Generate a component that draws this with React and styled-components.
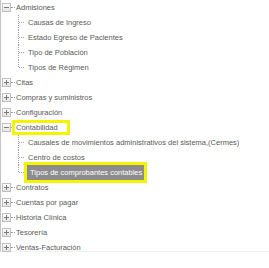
import React from "react";
import styled, { createGlobalStyle, css } from "styled-components";

const Global = createGlobalStyle`
  html, body { margin: 0; padding: 0; background: #fff; }
  body { font-family: "Liberation Sans", Arial, sans-serif; }
`;

const Panel = styled.div`
  width: 269px;
  height: 252px;
  box-sizing: border-box;
  border-left: 1px solid #c4c4c4;
  border-bottom: 1px solid #f0f0f0;
  padding-left: 1px;
`;

const List = styled.ul`
  list-style: none;
  margin: 0;
  padding: 0;
`;

const Node = styled.li`
  margin: 0;
  padding: 0;
`;

const Row = styled.div`
  display: flex;
  align-items: center;
  height: 15px;
`;

const ChildRow = styled(Row)`
  padding-left: 16px;
`;

const Label = styled.span`
  font-size: 7.5px;
  line-height: 9px;
  color: #5a5a5a;
  white-space: nowrap;
  padding: 0 2px 0 1px;
  ${(p) =>
    p.$selected &&
    css`
      background: #8c8c8c;
      color: #fff;
      line-height: 15px;
      padding: 0 2px 0 3px;
    `}
  ${(p) =>
    p.$marked &&
    css`
      outline: 3px solid #f4f400;
      padding-right: ${p.$markPad || 2}px;
    `}
`;

const Connector = styled.span`
  width: 4px;
  border-top: 1px dotted #a0a0a0;
`;

function Expander({ open }) {
  return (
    <svg width="9" height="9" viewBox="0 0 9 9" style={{ flex: "none" }}>
      <defs>
        <linearGradient id="exg" x1="0" y1="0" x2="0" y2="1">
          <stop offset="0" stopColor="#ffffff" />
          <stop offset="1" stopColor="#e2e2e2" />
        </linearGradient>
      </defs>
      <rect x="0.5" y="0.5" width="8" height="8" fill="url(#exg)" stroke="#c0c0c0" />
      <line x1="2" y1="4.5" x2="7" y2="4.5" stroke="#7a7a7a" />
      {!open && <line x1="4.5" y1="2" x2="4.5" y2="7" stroke="#7a7a7a" />}
    </svg>
  );
}

function Branch({ last }) {
  return (
    <svg width="9" height="15" viewBox="0 0 9 15" style={{ flex: "none" }}>
      <line
        x1="0.5"
        y1="0"
        x2="0.5"
        y2={last ? 7.5 : 15}
        stroke="#a0a0a0"
        strokeDasharray="1 1"
      />
      <line x1="1" y1="7.5" x2="7" y2="7.5" stroke="#a0a0a0" strokeDasharray="1 1" />
    </svg>
  );
}

const tree = [
  {
    label: "Admisiones",
    open: true,
    children: [
      { label: "Causas de Ingreso" },
      { label: "Estado Egreso de Pacientes" },
      { label: "Tipo de Población" },
      { label: "Tipos de Régimen" },
    ],
  },
  { label: "Citas" },
  { label: "Compras y suministros" },
  { label: "Configuración" },
  {
    label: "Contabilidad",
    open: true,
    marked: true,
    markPad: 9,
    children: [
      { label: "Causales de movimientos administrativos del sistema,(Cermes)" },
      { label: "Centro de costos" },
      { label: "Tipos de comprobantes contables", selected: true, marked: true },
    ],
  },
  { label: "Contratos" },
  { label: "Cuentas por pagar" },
  { label: "Historia Clínica" },
  { label: "Tesorería" },
  { label: "Ventas-Facturación" },
];

export default function App() {
  return (
    <>
      <Global />
      <Panel>
        <List>
          {tree.map((n) => (
            <Node key={n.label}>
              <Row>
                <Expander open={n.open} />
                <Connector />
                <Label $marked={n.marked} $markPad={n.markPad}>
                  {n.label}
                </Label>
              </Row>
              {n.open && n.children && (
                <List>
                  {n.children.map((c, i) => (
                    <Node key={c.label}>
                      <ChildRow>
                        <Branch last={i === n.children.length - 1} />
                        <Label $selected={c.selected} $marked={c.marked}>
                          {c.label}
                        </Label>
                      </ChildRow>
                    </Node>
                  ))}
                </List>
              )}
            </Node>
          ))}
        </List>
      </Panel>
    </>
  );
}
